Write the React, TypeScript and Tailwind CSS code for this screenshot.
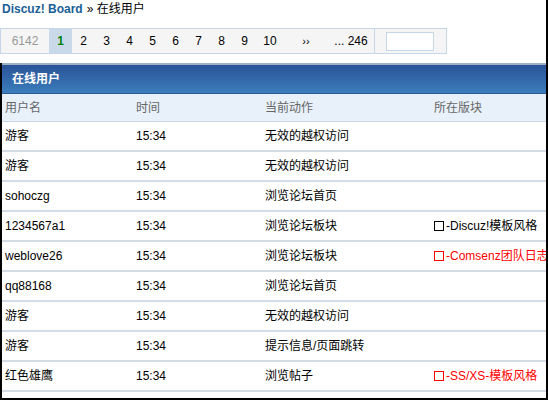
import React from 'react';

type OnlineRow = {
  user: string;
  time: string;
  action: string;
  forum?: string;
  hot?: boolean;
};

const rows: OnlineRow[] = [
  { user: '游客', time: '15:34', action: '无效的越权访问' },
  { user: '游客', time: '15:34', action: '无效的越权访问' },
  { user: 'sohoczg', time: '15:34', action: '浏览论坛首页' },
  { user: '1234567a1', time: '15:34', action: '浏览论坛板块', forum: '-Discuz!模板风格' },
  { user: 'weblove26', time: '15:34', action: '浏览论坛板块', forum: '-Comsenz团队日志', hot: true },
  { user: 'qq88168', time: '15:34', action: '浏览论坛首页' },
  { user: '游客', time: '15:34', action: '无效的越权访问' },
  { user: '游客', time: '15:34', action: '提示信息/页面跳转' },
  { user: '红色雄鹰', time: '15:34', action: '浏览帖子', forum: '-SS/XS-模板风格', hot: true },
];

const pages = ['2', '3', '4', '5', '6', '7', '8', '9'];

const Pager: React.FC = () => (
  <div className="flex h-[26px] w-[447px] items-stretch border border-[#c6d6e8] bg-[#f5f5f5] text-[12px] leading-none">
    <div className="flex w-[48px] items-center justify-center text-[#999999]">6142</div>
    <div className="flex w-[23px] items-center justify-center bg-[#c9d9ea] font-bold text-[#008000]">1</div>
    {pages.map((p) => (
      <div key={p} className="flex w-[23px] items-center justify-center text-black">
        {p}
      </div>
    ))}
    <div className="flex w-[28px] items-center justify-center text-black">10</div>
    <div className="flex w-[44px] items-center justify-center text-[11px] text-black">››</div>
    <div className="flex w-[47px] items-center justify-center border-r border-[#c6d6e8] text-black">... 246</div>
    <div className="flex flex-1 items-center pl-[11px]">
      <div className="h-[19px] w-[48px] border border-[#c6d6e8] bg-white" />
    </div>
  </div>
);

export default function App() {
  return (
    <div
      className="flex h-[400px] w-[548px] flex-col overflow-hidden border-r-2 border-black bg-white text-[12px] text-black"
      style={{ fontFamily: '"Liberation Sans", "Noto Sans CJK SC", sans-serif' }}
    >
      {/* breadcrumb */}
      <div className="flex h-[28px] items-start pl-[2px] pt-[2px] leading-[14px]">
        <span className="font-bold text-[#1b5e95]">Discuz! Board</span>
        <span className="ml-[4px]">» 在线用户</span>
      </div>

      <Pager />

      {/* online list */}
      <div className="mt-[9px] flex flex-1 flex-col border-b-2 border-l-2 border-black">
        <div className="border-t-2 border-[#9eb0c6]">
          <div className="flex h-[29px] items-center border-b border-[#2b5a93] bg-gradient-to-b from-[#2a5397] to-[#3b7dbc] pl-[10px] font-bold text-white">
            在线用户
          </div>
        </div>

        <div className="grid h-[28px] grid-cols-[131px_129px_169px_1fr] items-center border-b border-[#cbd7e4] bg-[#e8f1fa] pl-[3px] text-[#666666]">
          <span>用户名</span>
          <span>时间</span>
          <span>当前动作</span>
          <span>所在版块</span>
        </div>

        {rows.map((r, i) => (
          <div
            key={i}
            className="grid h-[30px] grid-cols-[131px_129px_169px_1fr] items-center border-b-2 border-[#d3dbe5] pl-[3px]"
          >
            <span>{r.user}</span>
            <span>{r.time}</span>
            <span>{r.action}</span>
            <span className={`flex items-center whitespace-nowrap ${r.hot ? 'text-[#ff0000]' : 'text-black'}`}>
              {r.forum && (
                <span className="mr-[2px] inline-block h-[10px] w-[10px] border-[1.5px] border-current" />
              )}
              {r.forum}
            </span>
          </div>
        ))}
      </div>
    </div>
  );
}
